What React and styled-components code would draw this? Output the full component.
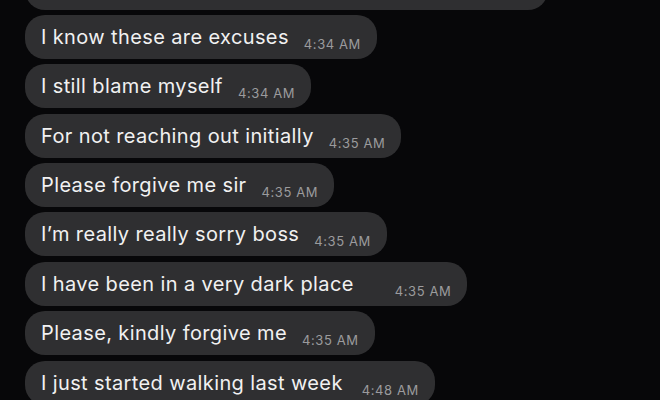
import styled, { createGlobalStyle } from "styled-components";

const GlobalStyle = createGlobalStyle`
  html, body {
    margin: 0;
    padding: 0;
    background: #070709;
    overflow: hidden;
  }
`;

const Screen = styled.div`
  width: 660px;
  height: 400px;
  overflow: hidden;
  background: #070709;
  font-family: Inter, "Liberation Sans", Arial, sans-serif;
`;

// thread is scrolled, so the first bubble sits partly above the top edge
const Thread = styled.div`
  display: flex;
  flex-direction: column;
  align-items: flex-start;
  gap: 5.4px;
  margin-top: -34.5px;
  padding-left: 25px;
`;

const Bubble = styled.div`
  display: flex;
  align-items: flex-start;
  box-sizing: border-box;
  height: 44px;
  width: ${(p) => (p.$width ? `${p.$width}px` : "auto")};
  padding: 10px 16px 0 16px;
  border-radius: 20px;
  background: #2f2f31;
`;

const Text = styled.span`
  font-size: 20px;
  line-height: 24px;
  letter-spacing: 0.38px;
  color: #f1f1f1;
  white-space: nowrap;
`;

const Stamp = styled.span`
  margin-top: 11px;
  margin-left: ${(p) => p.$gap}px;
  font-size: 13px;
  line-height: 16px;
  letter-spacing: 0.6px;
  color: #9b9b9d;
  white-space: nowrap;
`;

const messages = [
  { text: "I know these are excuses", time: "4:34 AM", gap: 15 },
  { text: "I still blame myself", time: "4:34 AM", gap: 15 },
  { text: "For not reaching out initially", time: "4:35 AM", gap: 15 },
  { text: "Please forgive me sir", time: "4:35 AM", gap: 15 },
  { text: "I\u2019m really really sorry boss", time: "4:35 AM", gap: 15 },
  { text: "I have been in a very dark place", time: "4:35 AM", gap: 41 },
  { text: "Please, kindly forgive me", time: "4:35 AM", gap: 15 },
  { text: "I just started walking last week", time: "4:48 AM", gap: 19 },
];

const App = () => {
  return (
    <Screen>
      <GlobalStyle />
      <Thread>
        <Bubble $width={523} />
        {messages.map((m, i) => (
          <Bubble key={i}>
            <Text>{m.text}</Text>
            <Stamp $gap={m.gap}>{m.time}</Stamp>
          </Bubble>
        ))}
      </Thread>
    </Screen>
  );
};

export default App;
